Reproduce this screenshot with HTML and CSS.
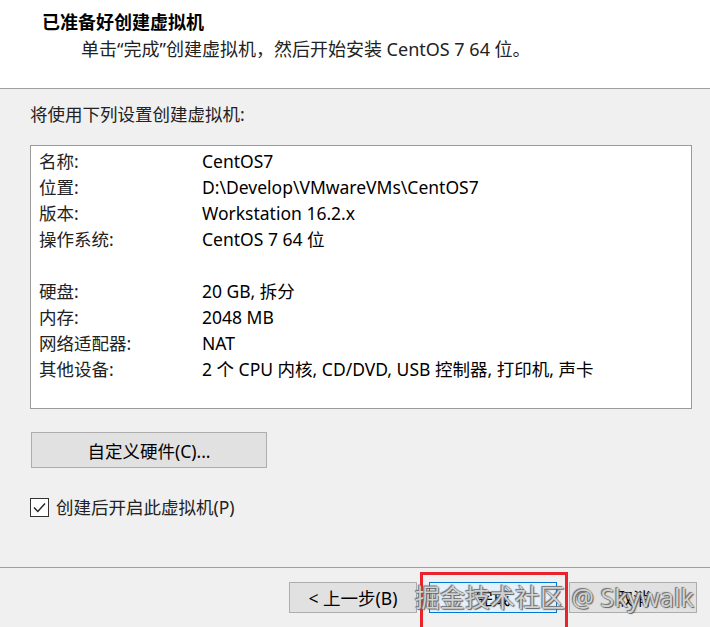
FILE: index.html
```html
<!DOCTYPE html>
<html lang="zh-CN">
<head>
    <meta charset="UTF-8">
    <meta name="viewport" content="width=device-width, initial-scale=1.0">
    <title>新建虚拟机向导</title>
    <link rel="stylesheet" href="styles.css">
</head>
<body>
    <div class="wizard">
        <div class="header">
            <div class="title">已准备好创建虚拟机</div>
            <div class="subtitle">单击“完成”创建虚拟机，然后开始安装 CentOS 7 64 位。</div>
        </div>

        <div class="content">
            <div class="intro">将使用下列设置创建虚拟机:</div>

            <div class="summary">
                <div class="row"><span class="key">名称:</span><span>CentOS7</span></div>
                <div class="row"><span class="key">位置:</span><span>D:\Develop\VMwareVMs\CentOS7</span></div>
                <div class="row"><span class="key">版本:</span><span>Workstation 16.2.x</span></div>
                <div class="row"><span class="key">操作系统:</span><span>CentOS 7 64 位</span></div>
                <div class="row"></div>
                <div class="row"><span class="key">硬盘:</span><span>20 GB, 拆分</span></div>
                <div class="row"><span class="key">内存:</span><span>2048 MB</span></div>
                <div class="row"><span class="key">网络适配器:</span><span>NAT</span></div>
                <div class="row"><span class="key">其他设备:</span><span>2 个 CPU 内核, CD/DVD, USB 控制器, 打印机, 声卡</span></div>
            </div>

            <button class="btn btn-hw">自定义硬件(C)...</button>

            <label class="check">
                <span class="box">
                    <svg width="17" height="17" viewBox="0 0 17 17"><path d="M3 8.5 L6.8 12.5 L14 4.5" fill="none" stroke="#222" stroke-width="1.4"/></svg>
                </span>
                创建后开启此虚拟机(P)
            </label>
        </div>

        <div class="footer">
            <button class="btn">&lt; 上一步(B)</button>
            <button class="btn btn-default">完成</button>
            <button class="btn">取消</button>
        </div>

        <!-- screenshot annotation + watermark -->
        <div class="mark-box"></div>
        <div class="watermark">掘金技术社区 @ Skywalk</div>
    </div>
</body>
</html>
```

FILE: styles.css
```css
body { margin: 0; background: #f0f0f0; font-family: "Noto Sans", "Noto Sans CJK SC", sans-serif; font-size: 17.5px; color: #000; }
.wizard { position: relative; width: 710px; height: 627px; overflow: hidden; }

.header { background: #fff; height: 89px; box-sizing: border-box; padding: 9px 0 0 42px; border-bottom: 1px solid #a0a0a0; }
.title { font-size: 18px; font-weight: bold; line-height: 26px; }
.subtitle { margin: 1px 0 0 39px; line-height: 26px; font-size: 18px; color: #222; }

.content { padding: 13px 18px 0 30px; height: 478px; box-sizing: border-box; }
.intro { line-height: 24px; color: #222; }
.summary { margin-top: 19px; height: 264px; box-sizing: border-box; background: #fff; border: 1px solid #9a9a9a; padding: 2px 8px; }
.row { display: flex; height: 26px; line-height: 26px; white-space: nowrap; }
.key { width: 163px; color: #222; }

.btn { font: inherit; color: #000; background: #e1e1e1; border: 1px solid #adadad; padding: 0; width: 128px; height: 31px; }
.btn-hw { display: block; margin-top: 23px; margin-left: 1px; width: 236px; height: 36px; }
.btn-default { background: #e5f1fb; border-color: #0078d7; }

.check { display: flex; align-items: center; gap: 7px; margin-top: 29px; line-height: 20px; color: #222; }
.box { width: 17px; height: 17px; border: 1px solid #333; background: #fff; display: flex; }

.footer { border-top: 1px solid #a0a0a0; display: flex; justify-content: flex-end; gap: 12px; padding: 14px 13px 0 0; }

.mark-box { position: absolute; left: 420px; top: 572px; width: 142px; height: 70px; border: 3px solid #e8232b; }
.watermark { position: absolute; left: 415px; top: 579px; font-size: 25px; line-height: 36px; color: rgba(255, 255, 255, 0.75); text-shadow: 0 0 1px #444, 1px 1px 1px #666, -1px -1px 1px #777; white-space: nowrap; }
```
